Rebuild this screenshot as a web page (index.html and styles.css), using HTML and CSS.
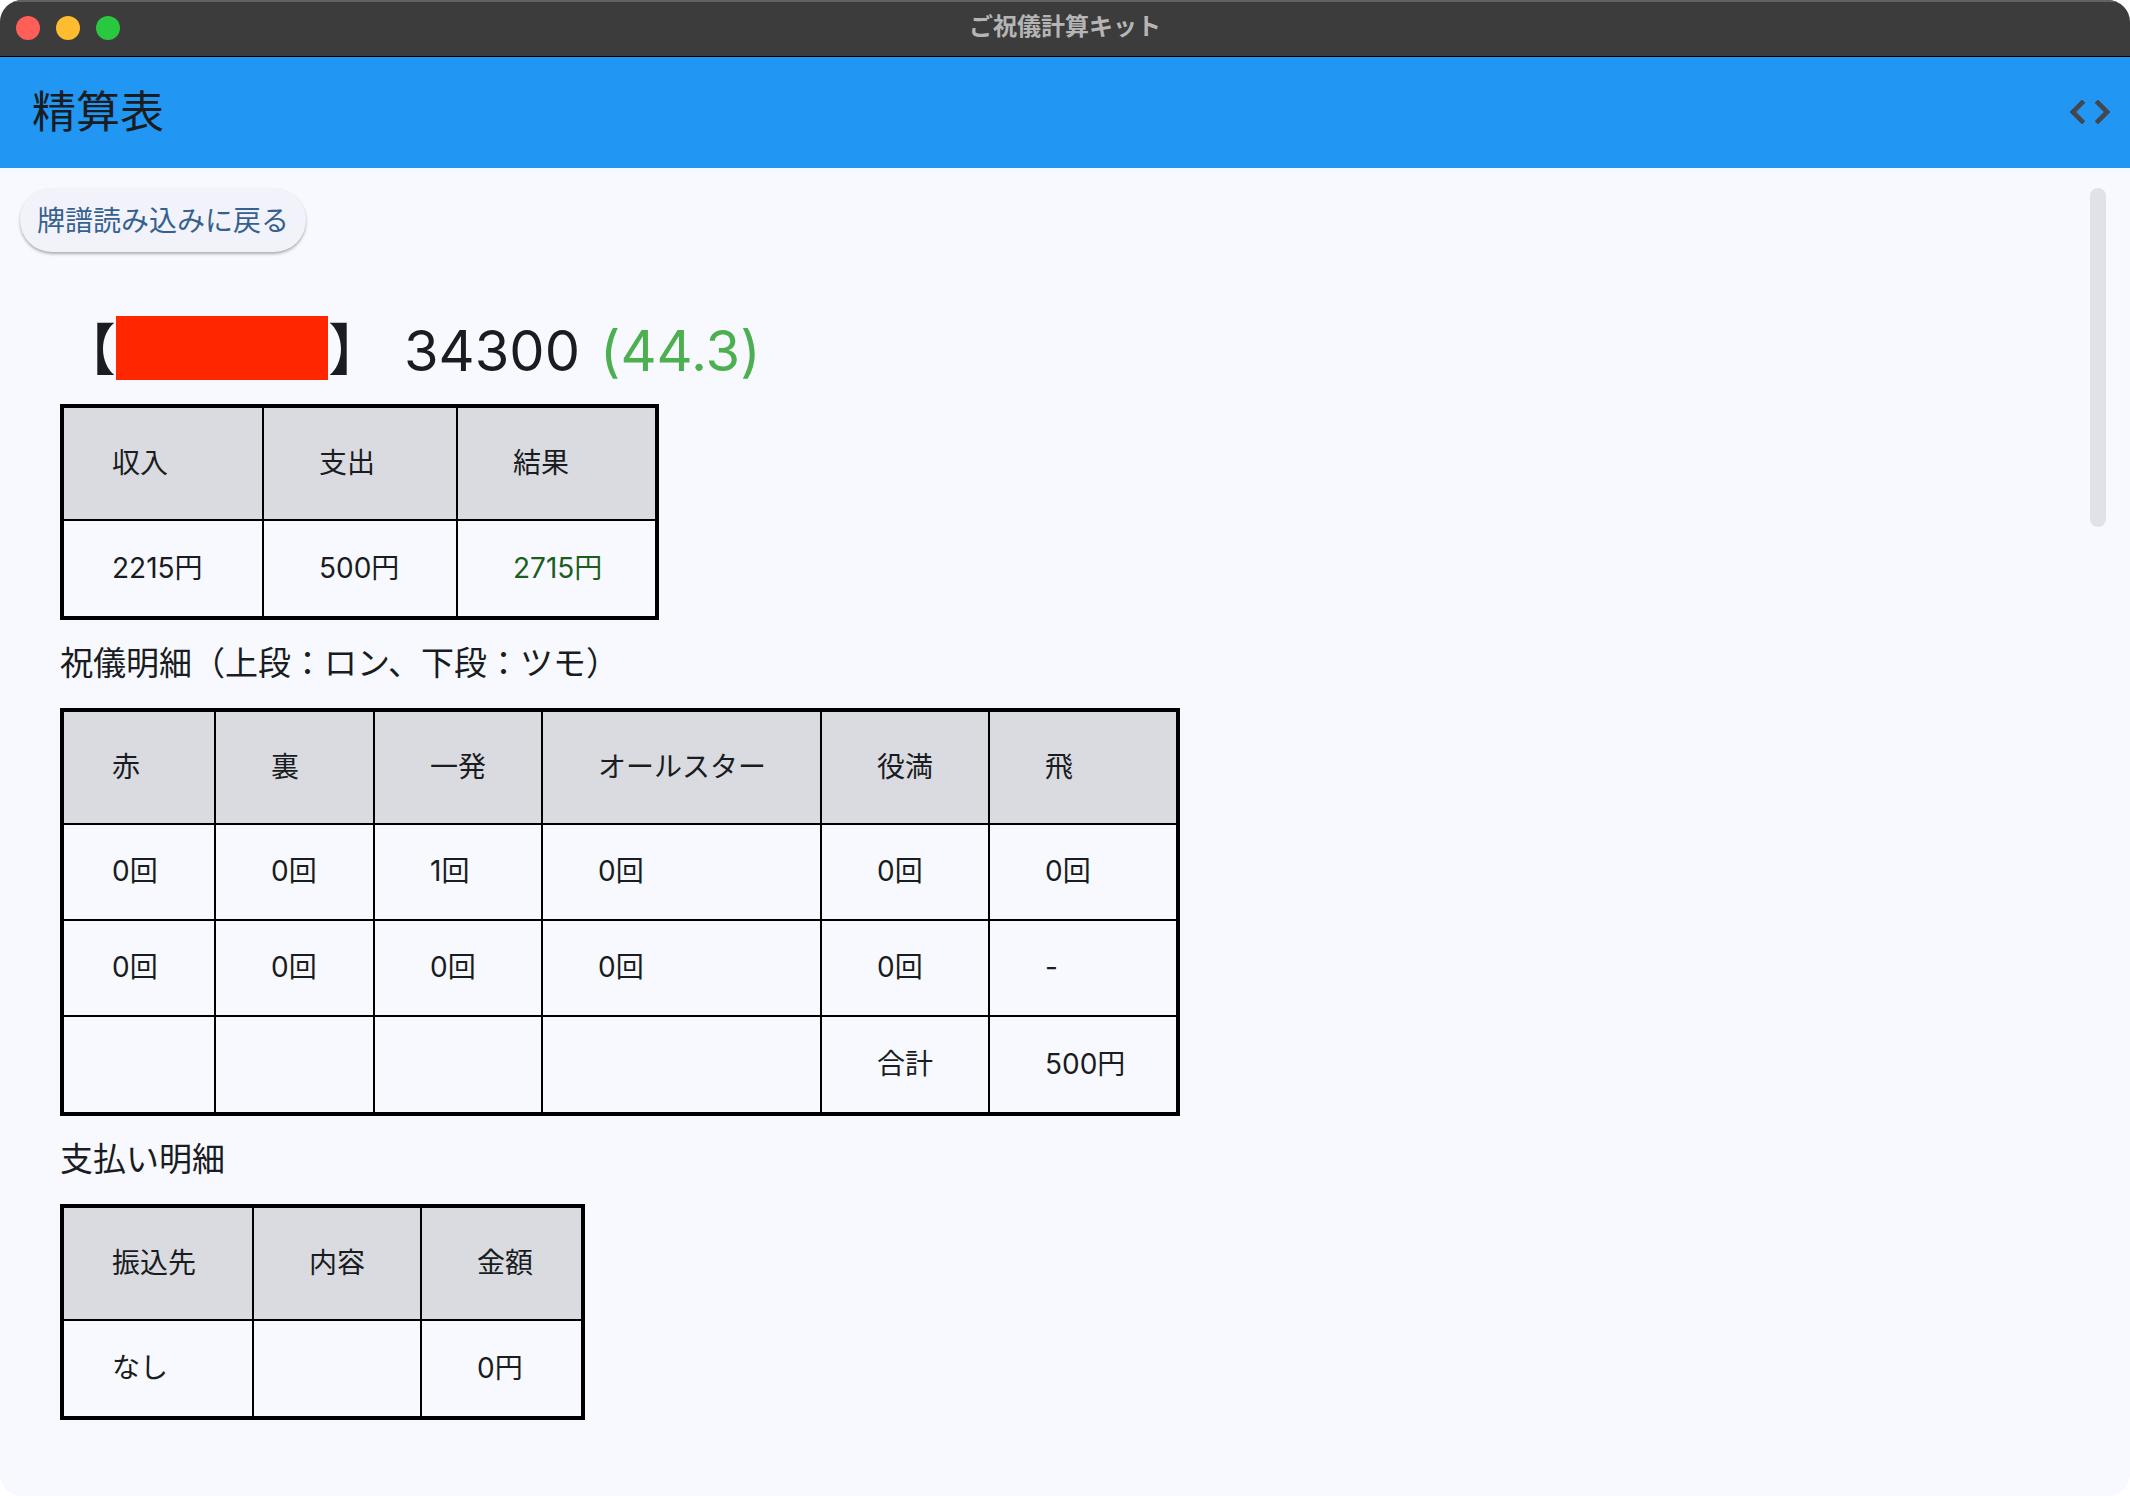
FILE: index.html
```html
<!DOCTYPE html>
<html lang="ja">
<head>
<meta charset="utf-8">
<meta name="viewport" content="width=device-width, initial-scale=1">
<title>ご祝儀計算キット</title>
<link rel="stylesheet" href="styles.css">
</head>
<body>
<div class="window">
  <div class="titlebar">
    <div class="lights">
      <button class="light light-close" type="button" aria-label="閉じる"></button>
      <button class="light light-min" type="button" aria-label="しまう"></button>
      <button class="light light-zoom" type="button" aria-label="拡大"></button>
    </div>
    <div class="window-title">ご祝儀計算キット</div>
  </div>
  <header class="appbar">
    <h1 class="page-title">精算表</h1>
    <button class="icon-button" type="button" aria-label="コード">
      <svg class="icon" viewBox="0 0 24 24" aria-hidden="true"><path d="M9.4 16.6L4.8 12l4.6-4.6L8 6l-6 6 6 6 1.4-1.4zm5.2 0l4.6-4.6-4.6-4.6L16 6l6 6-6 6-1.4-1.4z"/></svg>
    </button>
  </header>
  <div class="body">
    <main class="content">
      <button class="back" type="button">牌譜読み込みに戻る</button>
      <section class="player">
        <h2 class="player-head">
          <span class="name">【<span class="masked"></span>】</span>
          <span>34300</span>
          <span class="plus">(44.3)</span>
        </h2>
        <table class="sheet">
          <colgroup><col class="w-income"><col class="w-expense"><col class="w-result"></colgroup>
          <thead><tr><th>収入</th><th>支出</th><th>結果</th></tr></thead>
          <tbody><tr><td>2215円</td><td>500円</td><td class="profit">2715円</td></tr></tbody>
        </table>
        <h3 class="caption">祝儀明細（上段：ロン、下段：ツモ）</h3>
        <table class="sheet">
          <colgroup><col class="w-red"><col class="w-ura"><col class="w-pair"><col class="w-star"><col class="w-pair"><col class="w-bust"></colgroup>
          <thead><tr><th>赤</th><th>裏</th><th>一発</th><th>オールスター</th><th>役満</th><th>飛</th></tr></thead>
          <tbody>
            <tr><td>0回</td><td>0回</td><td>1回</td><td>0回</td><td>0回</td><td>0回</td></tr>
            <tr><td>0回</td><td>0回</td><td>0回</td><td>0回</td><td>0回</td><td>-</td></tr>
            <tr><td></td><td></td><td></td><td></td><td>合計</td><td>500円</td></tr>
          </tbody>
        </table>
        <h3 class="caption">支払い明細</h3>
        <table class="sheet">
          <colgroup><col class="w-payee"><col class="w-pair"><col class="w-amount"></colgroup>
          <thead><tr><th>振込先</th><th>内容</th><th>金額</th></tr></thead>
          <tbody><tr><td>なし</td><td></td><td>0円</td></tr></tbody>
        </table>
      </section>
    </main>
    <div class="scroll-track"><div class="scroll-thumb"></div></div>
  </div>
</div>
</body>
</html>
```
FILE: styles.css
```css
* {
  box-sizing: border-box;
}

body {
  margin: 0;
  background: #fff;
  color: #191c20;
  font-family: Inter, "Noto Sans CJK JP", sans-serif;
  font-size: 28px;
  font-variant-ligatures: no-contextual;
}

button {
  border: 0;
  padding: 0;
  font: inherit;
}

h1, h2, h3 {
  margin: 0;
  font-weight: 400;
}

.window {
  display: flex;
  flex-direction: column;
  min-height: 100vh;
  overflow: hidden;
  border-radius: 22px;
  background: #f8f9ff;
}

.titlebar {
  display: grid;
  grid-template-columns: 1fr auto 1fr;
  align-items: center;
  height: 56px;
  padding: 0 16px;
  box-shadow: inset 0 2px #626262;
  background: #3c3c3c;
}

.lights {
  display: flex;
  gap: 16px;
}

.light {
  width: 24px;
  height: 24px;
  border-radius: 50%;
}

.light-close { background: #ff5f57; }
.light-min { background: #febc2e; }
.light-zoom { background: #28c840; }

.window-title {
  padding-bottom: 2px;
  color: #b5b5b5;
  font-size: 24px;
  font-weight: 700;
  line-height: 36px;
}

.appbar {
  display: flex;
  align-items: center;
  justify-content: space-between;
  height: 112px;
  padding: 0 16px 0 32px;
  box-shadow: inset 0 1px #000;
  background: #2196f3;
}

.page-title {
  font-size: 44px;
  line-height: 56px;
}

.icon-button {
  display: flex;
  background: none;
}

.icon {
  width: 48px;
  height: 48px;
  fill: #43474e;
  stroke: #43474e;
  stroke-width: 0.5;
}

.body {
  display: flex;
  flex: 1;
  justify-content: space-between;
  padding: 20px 24px 20px 20px;
}

.back {
  height: 64px;
  padding: 0 17px 2px;
  border-radius: 32px;
  background: #f2f3fa;
  box-shadow: 0 2px 3px rgba(0, 0, 0, 0.3);
  color: #36618e;
}

.player {
  padding: 64px 40px 40px;
}

.player-head {
  display: flex;
  align-items: flex-start;
  gap: 20px;
  margin-bottom: 18px;
  font-size: 56px;
  line-height: 70px;
}

.name {
  display: flex;
  align-items: flex-start;
  line-height: 68px;
}

.masked {
  width: 212px;
  height: 64px;
  background: #ff2600;
}

.plus { color: #4caf50; }

.caption {
  padding-bottom: 2px;
  font-size: 33px;
  line-height: 86px;
}

.sheet {
  border: 4px solid #000;
  border-collapse: separate;
  border-spacing: 0;
  line-height: 40px;
}

.sheet th,
.sheet td {
  height: 96px;
  padding: 0 50px 2px 55px;
  border: 0 solid #000;
  border-width: 0 0 2px 2px;
  font-weight: 400;
  text-align: left;
  white-space: nowrap;
}

.sheet th {
  height: 113px;
  background: #dadbe0;
}

.sheet tbody tr:last-child td {
  height: 95px;
  border-bottom: 0;
}

.sheet th:first-child,
.sheet td:first-child {
  padding-left: 48px;
  border-left: 0;
}

.sheet th:last-child,
.sheet td:last-child {
  padding-right: 40px;
}

.sheet .profit { color: #1b5e20; }

.w-income { width: 198px; }
.w-expense { width: 194px; }
.w-result { width: 199px; }
.w-red { width: 150px; }
.w-ura { width: 159px; }
.w-pair { width: 168px; }
.w-star { width: 279px; }
.w-bust { width: 188px; }
.w-payee { width: 188px; }
.w-amount { width: 161px; }

.scroll-track {
  width: 16px;
}

.scroll-thumb {
  height: 339px;
  border-radius: 8px;
  background: #e1e2e7;
}
```
